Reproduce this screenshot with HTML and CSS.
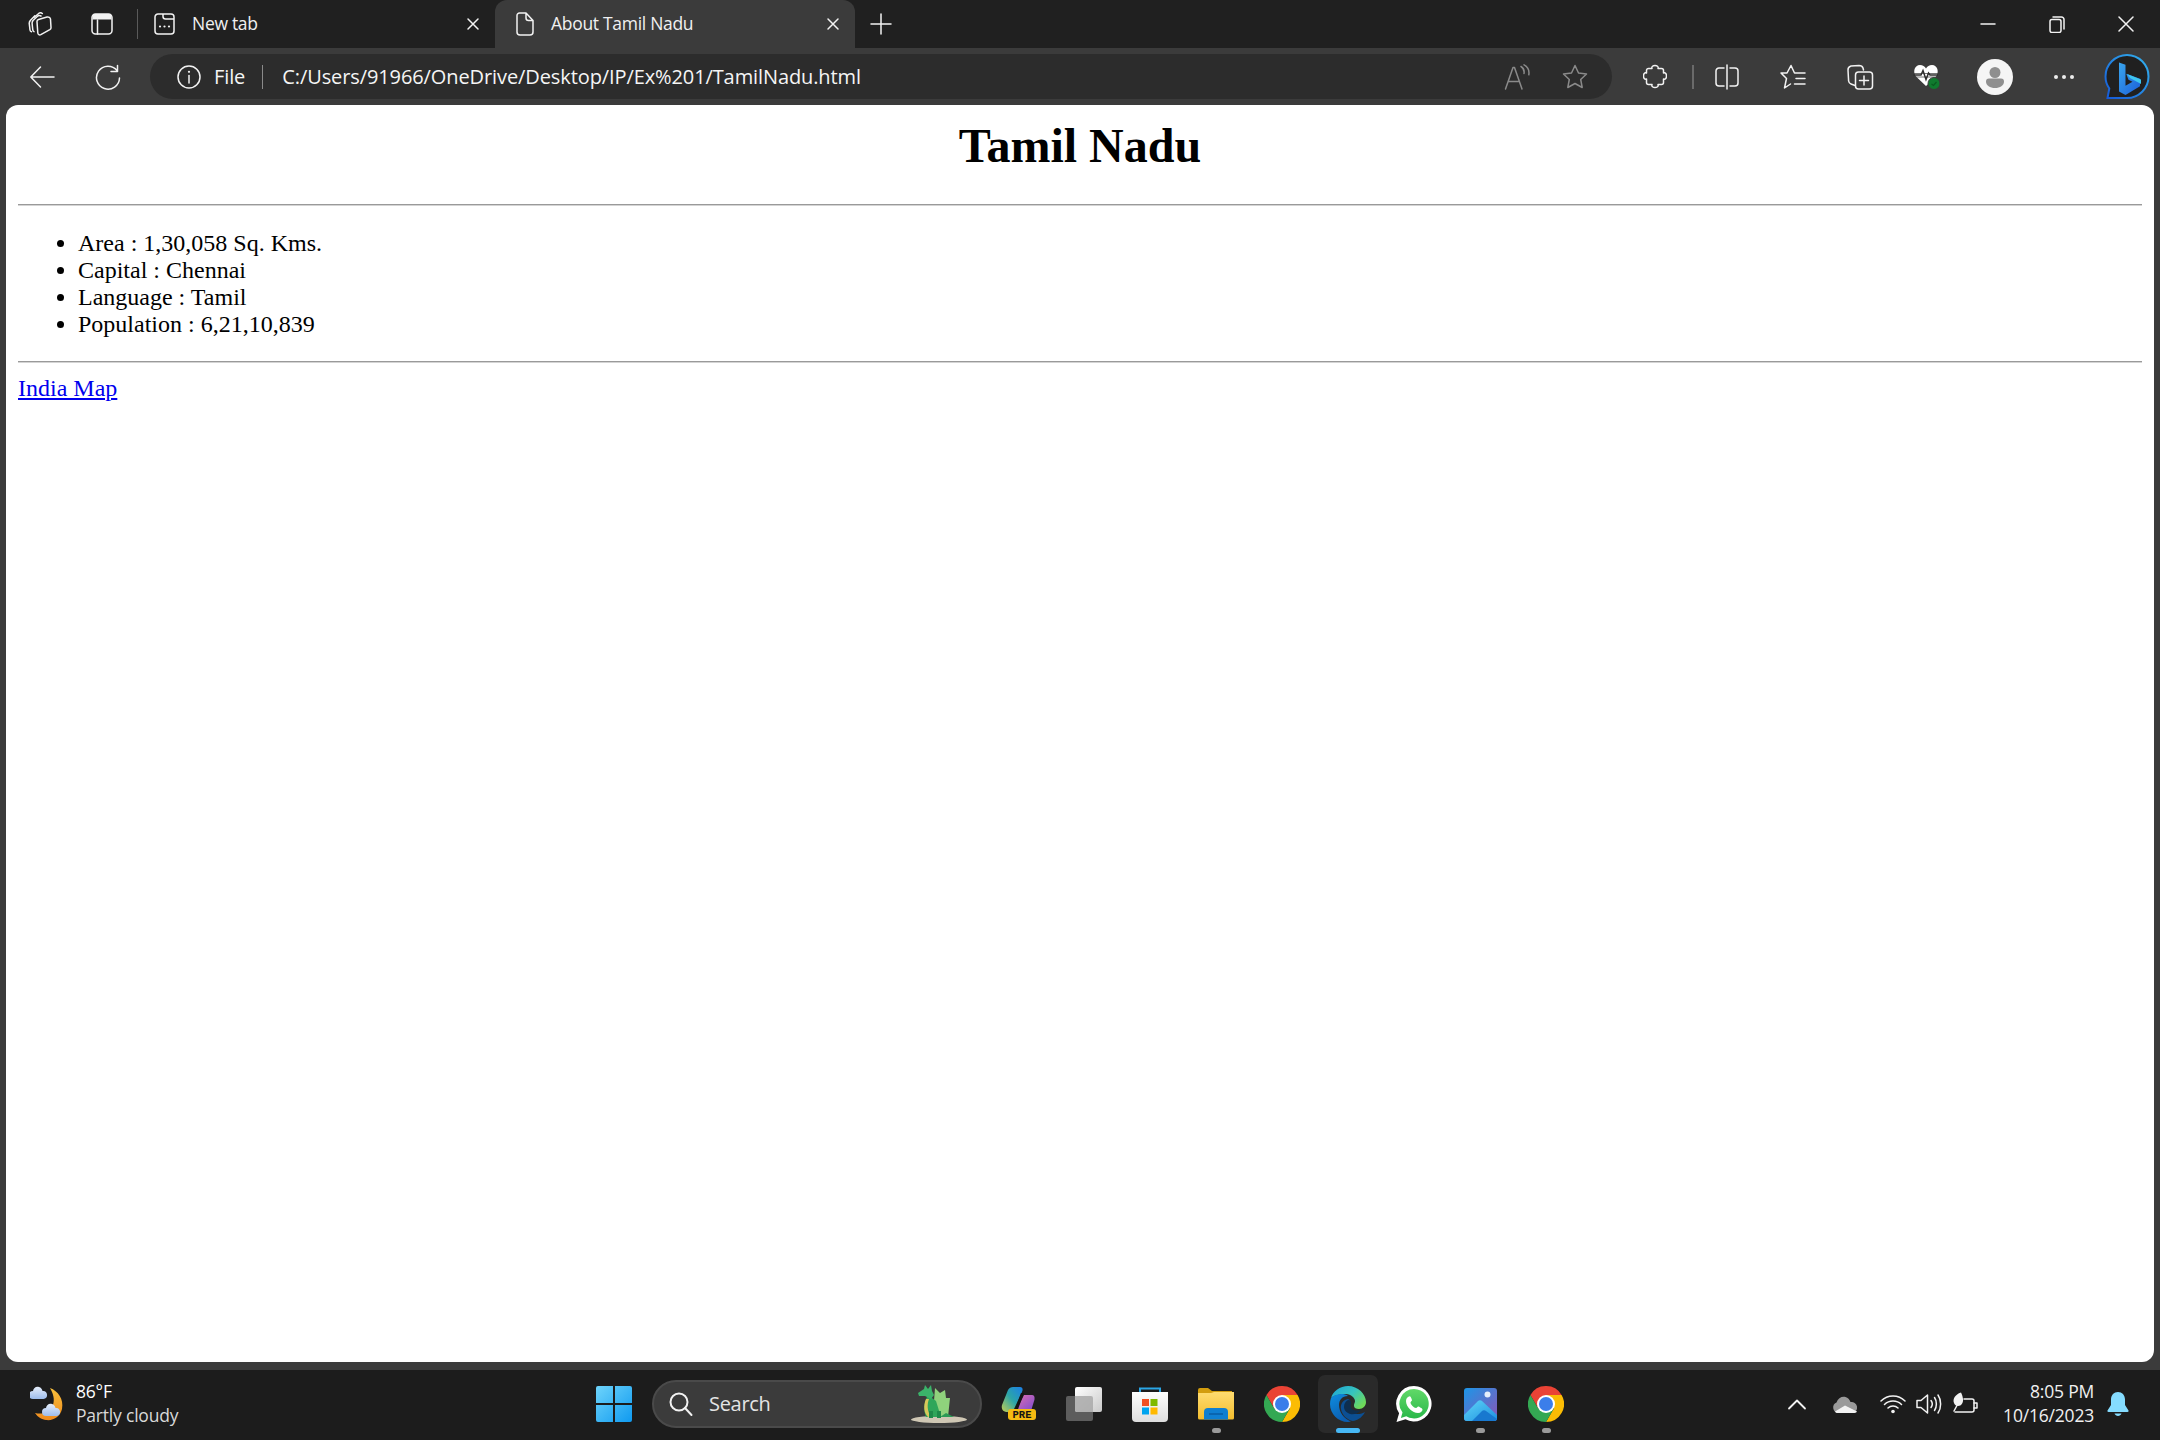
FILE: index.html
```html
<!DOCTYPE html>
<html lang="en">
<head>
<meta charset="utf-8">
<title>About Tamil Nadu</title>
<link rel="stylesheet" href="styles.css">
</head>
<body>
<div class="window">
  <header class="tabstrip">
    <div class="ts-btn first"><svg width="26" height="24" viewBox="0 0 26 24" class="ln"><path d="M8 5.500 13 1.200c1-.6 2.600-.3 3.300.3M4.300 8.500 8.800 3.800M4.300 8.500c-.8 1-1.200 2.300-1 3.500l.7 6c.1.900.8 1.500 1.500 1.800"/><path d="M7 8.500 11.500 4.200c1-.8 2.500-.8 3.500-.2M7 8.500c-.8 1-1 2-.9 3l.7 6.500c.1.800.6 1.300 1.200 1.600"/><path d="M12.500 7.500 21 5c1.700-.4 3.300.5 3.500 2.200l.5 8.300c.1 1-.4 1.700-1.200 2.200l-9 5c-1.400.7-2.800-.2-3-1.700L11 9.800c-.1-1.100.5-2 1.500-2.300Z"/></svg></div>
    <div class="ts-btn"><svg width="22" height="22" viewBox="0 0 22 22" class="ln"><rect x="1" y="1" width="20" height="20" rx="3.500"/><path d="M1.500 6.500h19v-3a2.500 2.500 0 0 0-2.500-2.500H4a2.500 2.500 0 0 0-2.500 2.500Z" class="solid"/><path d="M6.500 7v14"/></svg></div>
    <span class="ts-sep"></span>
    <div class="tab">
      <svg width="21" height="22" viewBox="0 0 21 22" class="ln tab-icon"><path d="M4 1h13a3 3 0 0 1 3 3v14a3 3 0 0 1-3 3H4a3 3 0 0 1-3-3V4a3 3 0 0 1 3-3ZM9 1v2.500A2.500 2.500 0 0 0 11.500 6H20"/><circle cx="6" cy="13.500" r="1.100" class="solid"/><circle cx="10.500" cy="13.500" r="1.100" class="solid"/><circle cx="15" cy="13.500" r="1.100" class="solid"/></svg>
      <span class="tab-title">New tab</span>
      <svg width="14" height="14" viewBox="0 0 14 14" class="ln tab-close"><path d="m2 2 10 10M12 2 2 12"/></svg>
    </div>
    <div class="tab tab-active">
      <svg width="18" height="24" viewBox="0 0 18 24" class="ln tab-icon"><path d="M3.500 1H10l7 7.500V20a3 3 0 0 1-3 3H4a3 3 0 0 1-3-3V3.500A2.500 2.500 0 0 1 3.500 1ZM10 1v5a2.500 2.500 0 0 0 2.500 2.500H17"/></svg>
      <span class="tab-title">About Tamil Nadu</span>
      <svg width="14" height="14" viewBox="0 0 14 14" class="ln tab-close"><path d="m2 2 10 10M12 2 2 12"/></svg>
    </div>
    <svg width="24" height="24" viewBox="0 0 24 24" class="ln new-tab"><path d="M12 2v20M2 12h20"/></svg>
    <div class="win-controls">
      <div class="win-btn"><svg width="16" height="16" viewBox="0 0 16 16" class="ln"><path d="M1 8h14"/></svg></div>
      <div class="win-btn"><svg width="16" height="17" viewBox="0 0 16 17" class="ln"><rect x="1" y="3.500" width="11" height="13" rx="2"/><path d="M4 1h8.500A2.500 2.500 0 0 1 15 3.500V13"/></svg></div>
      <div class="win-btn"><svg width="16" height="16" viewBox="0 0 16 16" class="ln"><path d="m1 1 14 14M15 1 1 15"/></svg></div>
    </div>
  </header>

  <nav class="toolbar">
    <div class="tb-btn"><svg width="26" height="24" viewBox="0 0 26 24" class="ln"><path d="M25 12H2M11.500 2 1.800 12l9.700 10"/></svg></div>
    <div class="tb-btn"><svg width="26" height="26" viewBox="0 0 26 26" class="ln"><path d="M22 6.500A11.500 11.500 0 1 0 24.500 14M22.500 1.500v6h-6.500"/></svg></div>
    <div class="omnibox">
      <svg width="24" height="24" viewBox="0 0 24 24" class="ln"><circle cx="12" cy="12" r="11"/><path d="M12 10.500v7.500"/><circle cx="12" cy="6.800" r="1.100" class="solid"/></svg>
      <span class="omni-file">File</span>
      <span class="omni-sep"></span>
      <span class="omni-url">C:/Users/91966/OneDrive/Desktop/IP/Ex%201/TamilNadu.html</span>
      <svg width="28" height="26" viewBox="0 0 28 26" class="ln dim read"><path d="M1.500 25 9 3.500h1.500L18 25M4.500 17.500H15M17 2.500c2.500 1.500 3.500 4 3 7M20 .8c4 2 5.500 5.500 4.800 10"/></svg>
      <svg width="26" height="25" viewBox="0 0 26 25" class="ln dim"><path d="m13 1.500 3.500 7.500 8 1-5.800 5.500 1.500 8L13 19.500l-7.200 4 1.500-8L1.500 10l8-1Z"/></svg>
    </div>
    <div class="tb-btn tb-first"><svg width="24" height="27" viewBox="0 0 24 27" class="ln"><path d="M9 5.500C7.500 1.500 16.500 1.500 15 5.500H18.500a2 2 0 0 1 2 2V10C24.500 8.500 24.500 17.500 20.500 16V19.500a2 2 0 0 1-2 2H15C16.500 25.500 7.500 25.500 9 21.500H5.500a2 2 0 0 1-2-2V16C-.5 17.500-.5 8.500 3.500 10V7.500a2 2 0 0 1 2-2Z"/></svg></div>
    <span class="tb-sep"></span>
    <div class="tb-btn"><svg width="24" height="26" viewBox="0 0 24 26" class="ln"><path d="M12 1v24M9 4H4a3 3 0 0 0-3 3v12a3 3 0 0 0 3 3h5M15 4h5a3 3 0 0 1 3 3v12a3 3 0 0 1-3 3h-5"/></svg></div>
    <div class="tb-btn"><svg width="28" height="26" viewBox="0 0 28 26" class="ln"><path d="M8 9H2l5.500 5.500L5.500 24l6-4M8 9l4-7.500L15.500 9H18M18 9h8M17 14.500h9M15.500 20H26"/></svg></div>
    <div class="tb-btn tb-coll"><svg width="27" height="26" viewBox="0 0 27 26" class="ln"><path d="M8 21.500 4 20c-1.500-.5-2.200-1.700-2.400-3L1 6c-.1-2 1-3.500 3-4l8-.5c2 0 3.500.8 4 2.500l.5 2"/><rect x="8.500" y="8" width="17" height="17" rx="3"/><path d="M17 12v9M12.500 16.500h9"/></svg></div>
    <div class="tb-btn"><svg width="30" height="28" viewBox="0 0 30 28"><path d="M16 23 6 13.500C2.500 9 4.500 2 10 2c2.800 0 4.700 1.500 6 3.500C17.300 3.500 19.200 2 22 2c5.500 0 7.500 7 4 11.500Z" fill="#fff"/><path d="M3 10.500h26M3 14h26" stroke="#3b3b3b" stroke-width=".7"/><path d="M3.500 12H11l2-4.500 3 9 2.500-6.500 1.500 2H28" fill="none" stroke="#2e2e2e" stroke-width="1.500"/><circle cx="24" cy="20.500" r="6" fill="#0f7b2e" stroke="#3b3b3b"/><path d="m21.500 21 2 1.500 3-3.500" stroke="#0a5a20" fill="none" stroke-width="1.200"/></svg></div>
    <div class="tb-btn tb-wide"><svg width="36" height="36" viewBox="0 0 36 36"><circle cx="18" cy="18" r="18" fill="#f5f5f5"/><circle cx="18" cy="13.500" r="5.500" fill="#8f8f8f"/><path d="M9 22.500a3 3 0 0 1 3-3h12a3 3 0 0 1 3 3c0 4-4 6.500-9 6.500s-9-2.500-9-6.500Z" fill="#8f8f8f"/></svg></div>
    <div class="tb-btn"><svg width="22" height="6" viewBox="0 0 22 6" class="fillw"><circle cx="3" cy="3" r="2"/><circle cx="11" cy="3" r="2"/><circle cx="19" cy="3" r="2"/></svg></div>
    <div class="tb-btn tb-bing"><svg width="46" height="46" viewBox="0 0 46 46"><defs><linearGradient id="bingring" x1="0" y1="1" x2="1" y2="0"><stop offset="0" stop-color="#1558d6"/><stop offset="1" stop-color="#33b3ee"/></linearGradient><linearGradient id="bingb" x1="0" y1="0" x2="1" y2="1"><stop offset="0" stop-color="#39a5ee"/><stop offset="1" stop-color="#1b5fd8"/></linearGradient></defs><path d="M23 1a21.500 21.500 0 0 1 0 43H3.500l1.800-9.500C2.800 31 1.500 27 1.500 22.500A21.500 21.500 0 0 1 23 1Z" fill="#202020" stroke="url(#bingring)" stroke-width="2"/><path d="M15 8.500l6.500 2.300v21l7-4-4-2-2.300-6 13.800 5v7.500L21.500 41 15 37.500Z" fill="url(#bingb)"/><path d="m23 20 14 5.500v4.500L26 24Z" fill="#3dc5ee"/></svg></div>
  </nav>

  <main class="page">
    <h1 class="heading">Tamil Nadu</h1>
    <hr class="rule">
    <ul class="facts">
      <li>Area : 1,30,058 Sq. Kms.</li>
      <li>Capital : Chennai</li>
      <li>Language : Tamil</li>
      <li>Population : 6,21,10,839</li>
    </ul>
    <hr class="rule">
    <p class="map-para"><a href="#india" class="map-link">India Map</a></p>
  </main>

  <footer class="taskbar">
    <div class="weather">
      <svg width="38" height="38" viewBox="0 0 38 38"><defs><linearGradient id="moon" x1="0" y1="0" x2="0" y2="1"><stop offset="0" stop-color="#f9c03c"/><stop offset="1" stop-color="#ee8a1d"/></linearGradient><linearGradient id="cld" x1="0" y1="0" x2="0" y2="1"><stop offset="0" stop-color="#e6eefb"/><stop offset="1" stop-color="#9dbcec"/></linearGradient></defs><path d="M20 3c8 3 14 11 12 21-1.500 7-8 12-16 11-4-.5-8-2.500-11-7 8 2 15-1 18-8 2-6 0-12-3-17Z" fill="url(#moon)"/><path d="M3 14a4 4 0 0 1 0-8c.5-3 3-5 6-4 2 .5 3 2 3.500 4a4 4 0 0 1 1 8Z" fill="url(#cld)"/><path d="M16 31a4 4 0 0 1 0-8c.5-3 3-5 6-4 2 .5 3 2 3.500 4a4 4 0 0 1 1 8Z" fill="url(#cld)"/></svg>
      <div class="weather-text"><span class="temp">86°F</span><span class="cond">Partly cloudy</span></div>
    </div>
    <div class="tb-item"><svg width="36" height="36" viewBox="0 0 36 36"><defs><linearGradient id="win" x1="0" y1="0" x2="1" y2="1"><stop offset="0" stop-color="#6ed4fb"/><stop offset="1" stop-color="#0f9af0"/></linearGradient></defs><path d="M0 2a2 2 0 0 1 2-2h15v17H0ZM19 0h15a2 2 0 0 1 2 2v15H19ZM0 19h17v17H2a2 2 0 0 1-2-2ZM19 19h17v15a2 2 0 0 1-2 2H19Z" fill="url(#win)"/></svg></div>
    <div class="search">
      <svg width="26" height="26" viewBox="0 0 26 26" class="ln"><circle cx="11" cy="11" r="8.500" stroke-width="2"/><path d="m17 17 6.500 7" stroke-width="2"/></svg>
      <span class="search-text">Search</span>
      <svg width="60" height="40" viewBox="0 0 60 40" class="dragon"><ellipse cx="29" cy="35.500" rx="28" ry="3.500" fill="#cfc7b4"/><path d="M25 4l5 5 5-3 1 8 4 0-2 19h-8l-6-16Z" fill="#8fd27c"/><path d="M30 33h14l-8-4Z" fill="#2b9a55"/><path d="M18 11l8 6 5 16H16c-3-7-2-15 2-22Z" fill="#2fa65a"/><path d="M8 9l6-4 1-4 3 4 3-4 1 6 2 4-3 4-6-3H9Z" fill="#3bb36a"/><path d="M16 15c-3 7-2 14 2 18h3c-4-6-4-13-2-18Z" fill="#d9c65a"/><path d="M19 27h4v7h-4zM27 27h4v7h-4z" fill="#1f8a4a"/></svg>
    </div>
    <div class="tb-apps">
      <div class="tb-item"><svg width="36" height="34" viewBox="0 0 36 34"><defs><linearGradient id="cop1" x1="0" y1="1" x2="1" y2="0"><stop offset="0" stop-color="#c3cf52"/><stop offset=".5" stop-color="#2ca5a8"/><stop offset="1" stop-color="#1b7fe8"/></linearGradient><linearGradient id="cop2" x1="0" y1="0" x2="1" y2="1"><stop offset="0" stop-color="#e06fb0"/><stop offset="1" stop-color="#7a4bd0"/></linearGradient></defs><path d="M8 3c1-2 3-3 5-3h7c3 0 3 3 2 5l-8 17c-1 2-3 3-6 3-5 0-7-3-6-7Z" fill="url(#cop1)"/><path d="M24 8h8c2 0 3 2 2.500 4.500L31 24H16Z" fill="url(#cop2)"/><path d="M14 25 21 6h3l-7 19Z" fill="#141414"/><rect x="8" y="22" width="28" height="11" rx="3" fill="#f5bb12"/><text x="22" y="31" class="pre">PRE</text></svg></div>
      <div class="tb-item"><svg width="36" height="34" viewBox="0 0 36 34"><defs><linearGradient id="tv1" x1="0" y1="0" x2="1" y2="1"><stop offset="0" stop-color="#ffffff"/><stop offset="1" stop-color="#c9c9c9"/></linearGradient></defs><rect x="0" y="9" width="27" height="25" rx="2" fill="#5d5d5d"/><rect x="9" y="0" width="27" height="25" rx="2" fill="url(#tv1)"/><path d="M9 9h16a2 2 0 0 1 2 2v14H11a2 2 0 0 1-2-2Z" fill="#a9a9a9" opacity=".85"/></svg></div>
      <div class="tb-item"><svg width="36" height="36" viewBox="0 0 36 36"><defs><linearGradient id="bag" x1="0" y1="0" x2="0" y2="1"><stop offset="0" stop-color="#ffffff"/><stop offset="1" stop-color="#dedede"/></linearGradient></defs><path d="M8 9V2.500h20V9" fill="none" stroke="#2aa6e6" stroke-width="2"/><path d="M0 6h36v26a4 4 0 0 1-4 4H4a4 4 0 0 1-4-4Z" fill="url(#bag)"/><rect x="10" y="13" width="7" height="7" fill="#f25022"/><rect x="18.500" y="13" width="7" height="7" fill="#7fba00"/><rect x="10" y="21.500" width="7" height="7" fill="#00a4ef"/><rect x="18.500" y="21.500" width="7" height="7" fill="#ffb900"/></svg></div>
      <div class="tb-item"><svg width="36" height="32" viewBox="0 0 36 32"><defs><linearGradient id="fold" x1="0" y1="0" x2="0" y2="1"><stop offset="0" stop-color="#ffdc70"/><stop offset="1" stop-color="#f4bd2e"/></linearGradient></defs><path d="M0 2a2 2 0 0 1 2-2h8l4 3h20v10H0Z" fill="#d39d0e"/><path d="M0 5h13l3-1h20v26a1.500 1.500 0 0 1-1.500 1.500h-33A1.500 1.500 0 0 1 0 30Z" fill="url(#fold)"/><path d="M6 31.500V24a4 4 0 0 1 4-4h16a4 4 0 0 1 4 4v7.500Z" fill="#0f7fd1"/><path d="M11 26h14" stroke="#0a5da3" stroke-width="1.500"/></svg><span class="dot"></span></div>
      <div class="tb-item"><svg width="36" height="36" viewBox="0 0 36 36"><use href="#chrome"/></svg></div>
      <div class="tb-item tb-active"><svg width="36" height="36" viewBox="0 0 36 36"><defs><linearGradient id="edg1" x1="0" y1="0" x2="1" y2=".7"><stop offset="0" stop-color="#1ba4d8"/><stop offset=".55" stop-color="#36c3bf"/><stop offset="1" stop-color="#6fd958"/></linearGradient><linearGradient id="edg2" x1="0" y1="0" x2=".5" y2="1"><stop offset="0" stop-color="#0e8ee0"/><stop offset="1" stop-color="#0b5db0"/></linearGradient></defs><path d="M1 12C3 5 10 0 18 0c10 0 18 8 18 16 0 4-3 7-7 7-3 0-5-1-5-3 0-3 1-3 1-5 0-3-4-7-9-7-7 0-13 2-15 4Z" fill="url(#edg1)"/><path d="M1 12c3-3 8-4.500 12-4 3 .3 5 2 5 2-6 0-9 4-9 9 0 7 5 14 12 16.500-1 .3-2 .5-3 .5C8 36 0 28 0 18c0-2 .3-4 1-6Z" fill="url(#edg2)"/><path d="M18 13c-5 1-8 5-7 10 1 6 6 11 12 12 6-1 10-5 12-9-3 2-8 3-13 1-4-2-6-7-4-10 1-2 3-3 0-4Z" fill="#0b4f94"/><path d="M14 21c0-4 2-6 4-7 2 0 3 1 3 3s-1 3 0 5c2 3 7 3 10 2-4 5-10 5-13 3-3-1.500-4-4-4-6Z" fill="#0e2e4f"/></svg><span class="dot dot-active"></span></div>
      <div class="tb-item"><svg width="36" height="36" viewBox="0 0 36 36"><defs><linearGradient id="wa" x1="0" y1="0" x2="0" y2="1"><stop offset="0" stop-color="#61d968"/><stop offset="1" stop-color="#2ab84a"/></linearGradient></defs><path d="M18 0a17.700 17.700 0 1 1-8.500 33.300L.5 36l2.600-8.700A17.700 17.700 0 0 1 18 0Z" fill="#fff"/><path d="M18 3a14.700 14.700 0 1 1-7.700 27.200l-5.400 1.700 1.600-5.300A14.700 14.700 0 0 1 18 3Z" fill="url(#wa)"/><path d="M13.500 10.500c-1.500 0-3.500 1.500-3.500 4.500 0 6 6.500 12 12 12 3 0 4.500-2 4.500-3.500 0-1-3.500-3-4.300-3-.7 0-1.200 1.500-2.200 1.500-2 0-5.500-3.500-5.500-5.500 0-1 1.500-1.500 1.500-2.300 0-.9-1.500-4.200-2.500-4.200Z" fill="#fff"/></svg></div>
      <div class="tb-item"><svg width="33" height="33" viewBox="0 0 33 33"><defs><linearGradient id="ph" x1="0" y1="0" x2="1" y2="1"><stop offset="0" stop-color="#1c96e8"/><stop offset="1" stop-color="#8b55b5"/></linearGradient><linearGradient id="mt" x1="0" y1="0" x2="1" y2="1"><stop offset="0" stop-color="#5fd5f8"/><stop offset="1" stop-color="#1d8fe0"/></linearGradient></defs><rect width="33" height="33" rx="3" fill="url(#ph)"/><circle cx="23.500" cy="6.500" r="3" fill="#e5eefb"/><path d="M0 27 14 13c1-1 3-1 4 0l15 14v3a3 3 0 0 1-3 3H3a3 3 0 0 1-3-3Z" fill="url(#mt)"/><path d="M8 33 18 23c1-1 3-1 4 0l11 8v-1a3 3 0 0 1-3 3Z" fill="#1878cf"/></svg><span class="dot"></span></div>
      <div class="tb-item"><svg width="36" height="36" viewBox="0 0 36 36"><use href="#chrome"/></svg><span class="dot"></span></div>
    </div>
    <div class="tray">
      <div class="tray-slot"><svg width="20" height="12" viewBox="0 0 20 12" class="ln"><path d="m2 10.500 8-8 8 8" stroke-width="1.800"/></svg></div>
      <div class="tray-slot"><svg width="26" height="17" viewBox="0 0 26 17"><path d="M6 17A5.500 5.500 0 0 1 4.500 6.500C6 2 10 0 13.500 1c2.500.8 4 2.500 5 5a5.500 5.500 0 0 1 2 11Z" fill="#9a9a9a"/><path d="M3 15.500 13 9.500l12 6c-.5 1-2 1.500-4 1.500H6c-1.500 0-2.500-.5-3-1.500Z" fill="#f2f2f2"/></svg></div>
      <div class="tray-slot"><svg width="26" height="20" viewBox="0 0 26 20" class="ln"><path d="M1 7a17 17 0 0 1 24 0M4.500 10.500a12 12 0 0 1 17 0M8 14a7 7 0 0 1 10 0"/><circle cx="13" cy="17.500" r="1.800" class="solid"/></svg></div>
      <div class="tray-slot tray-narrow"><svg width="26" height="22" viewBox="0 0 26 22" class="ln"><path d="M1 7.500v7h4l6.500 5.500V2L5 7.500ZM15 7.500c1.500 2 1.500 5 0 7M18.500 4.500c2.500 3.500 2.500 9.500 0 13M22 2c3.500 5 3.500 13 0 18"/></svg></div>
      <div class="tray-slot"><svg width="26" height="24" viewBox="0 0 26 24" class="ln"><path d="M12 7h8a2 2 0 0 1 2 2v9a2 2 0 0 1-2 2H3"/><path d="M22 11h3v5h-3"/><path d="M9 .5C3 2.500.5 7 2 11c.6 1.800 2.200 3 4 3 3.500 0 5.500-3.500 5-7C10.700 4.500 10 2.500 9 .5Z" class="solid"/><path d="M2 19 8 8"/></svg></div>
      <div class="clock"><span>8:05 PM</span><span>10/16/2023</span></div>
      <svg width="22" height="24" viewBox="0 0 22 24"><path d="M11 0c4 0 7 3 7 7.500V13l3.500 5.500c.3.700 0 1.500-1 1.500h-19c-1 0-1.300-.8-1-1.500L4 13V7.500C4 3 7 0 11 0Z" fill="#85dcff"/><path d="M7.500 21.500h7c-.5 1.500-2 2.500-3.500 2.500s-3-1-3.500-2.500Z" fill="#85dcff"/></svg>
    </div>
  </footer>
</div>
<svg class="sprites" width="0" height="0" aria-hidden="true"><symbol id="chrome" viewBox="0 0 36 36"><path d="M2.410 9A18 18 0 0 1 33.590 9H18L10.200 22.500Z" fill="#ea4335"/><path d="M33.590 9A18 18 0 0 1 18 36L25.800 22.500 18 9Z" fill="#fbbc04"/><path d="M18 36A18 18 0 0 1 2.410 9L10.200 22.500H25.800Z" fill="#34a853"/><circle cx="18" cy="18" r="9" fill="#fff"/><circle cx="18" cy="18" r="7" fill="#3b7eea"/></symbol></svg>
</body>
</html>
```

FILE: styles.css
```css
* { box-sizing: border-box; }
html, body { margin: 0; height: 100%; overflow: hidden; }
body { background: #3b3b3b; color: #fff; font-family: "Open Sans", "Noto Sans", sans-serif; }
.sprites { position: absolute; }
svg { display: block; flex: none; }
.window { display: flex; flex-direction: column; height: 100vh; }

.ln { fill: none; stroke: #f2f2f2; stroke-width: 1.500; stroke-linecap: round; stroke-linejoin: round; }
.ln .solid { fill: #f2f2f2; stroke: none; }
.ln.dim { stroke: #8a8a8a; }
.fillw { fill: #ececec; }

.tabstrip { display: flex; align-items: center; height: 48px; padding-left: 7px; background: #202020; flex: none; }
.ts-btn { width: 63px; display: flex; justify-content: center; }
.ts-sep { width: 1px; height: 30px; margin-left: 4px; background: #5a5a5a; }
.tab { display: flex; align-items: center; align-self: stretch; width: 357px; padding: 0 15px 0 16px; font-size: 17.500px; letter-spacing: -0.3px; color: #f0f0f0; }
.tab-icon { margin-right: 17px; }
.tab-title { flex: 1; padding-bottom: 2px; }
.tab-active { width: 360px; padding-left: 21px; background: #3b3b3b; border-radius: 12px 12px 0 0; }
.new-tab { margin-left: 14px; }
.win-controls { display: flex; margin-left: auto; }
.win-btn { width: 69px; display: flex; justify-content: center; }

.toolbar { display: flex; align-items: center; height: 57px; padding-left: 9px; flex: none; }
.tb-btn { width: 66px; height: 45px; display: flex; align-items: center; justify-content: center; flex: none; }
.tb-first { margin-left: 10px; }
.tb-coll { padding-left: 2px; }
.tb-wide { width: 73px; }
.tb-bing { width: 60px; }
.tb-sep { width: 2px; height: 24px; margin-left: 4px; background: #6a6a6a; }
.omnibox { display: flex; align-items: center; width: 1462px; height: 45px; margin-left: 9px; padding: 0 24px 0 27px; background: #2c2c2c; border-radius: 23px; font-size: 20px; letter-spacing: -0.1px; }
.omni-file { margin-left: 13px; color: #f5f5f5; }
.omni-sep { width: 1px; height: 24px; margin: 0 19px 0 17px; background: #8a8a8a; }
.omni-url { flex: 1; color: #f5f5f5; }
.read { margin-right: 30px; }

.page { flex: 1; margin: 0 6px 8px; padding: 13px 12px 0; background: #fff; color: #000; border-radius: 12px; font-family: "Liberation Serif", "Times New Roman", serif; font-size: 24px; overflow: hidden; }
.heading { margin: 0 0 31px; font-size: 48px; font-weight: bold; text-align: center; }
.rule { margin: 0; border: 0; border-top: 1px solid #9a9a9a; border-bottom: 1px solid #d4d4d4; }
.facts { margin: 24px 0 23px; padding-left: 60px; }
.map-para { margin: 12px 0 0; }
.map-link { color: #0000ee; text-decoration: underline; }

.taskbar { display: flex; align-items: center; height: 70px; padding-bottom: 2px; background: #1c1c1c; flex: none; }
.weather { display: flex; align-items: center; width: 581px; padding-left: 30px; }
.weather-text { display: flex; flex-direction: column; margin-left: 8px; margin-bottom: 2px; font-size: 17.500px; line-height: 24px; letter-spacing: -0.2px; }
.cond { color: #d8d8d8; }
.tb-item { position: relative; display: flex; align-items: center; justify-content: center; width: 66px; height: 58px; flex: none; }
.tb-active::before { content: ""; position: absolute; inset: 0 3px; background: #2a2a2a; border-radius: 7px; }
.tb-active svg { position: relative; }
.dot { position: absolute; bottom: 0; left: 50%; width: 9px; height: 5px; margin-left: -4.500px; background: #9a9a9a; border-radius: 3px; }
.dot-active { width: 24px; margin-left: -12px; background: #47b8f5; }
.search { position: relative; display: flex; align-items: center; width: 330px; height: 48px; margin-left: 5px; padding-left: 14px; background: #3b3b3b; border: 2px solid #4a4a4a; border-radius: 24px; font-size: 20px; }
.search-text { margin-left: 15px; padding-bottom: 2px; color: #e4e4e4; letter-spacing: -0.3px; }
.dragon { position: absolute; right: 10px; top: 2px; }
.tb-apps { display: flex; margin-left: 3px; }
.pre { font: bold 10.500px "Liberation Mono", monospace; fill: #141414; text-anchor: middle; }
.tray { display: flex; align-items: center; margin-left: auto; padding-right: 31px; }
.tray-slot { width: 48px; display: flex; justify-content: center; }
.tray-narrow { width: 24px; }
.clock { display: flex; flex-direction: column; align-items: flex-end; width: 105px; margin-right: 13px; margin-bottom: 2px; font-size: 17.500px; line-height: 24px; letter-spacing: -0.2px; color: #f0f0f0; }
```
